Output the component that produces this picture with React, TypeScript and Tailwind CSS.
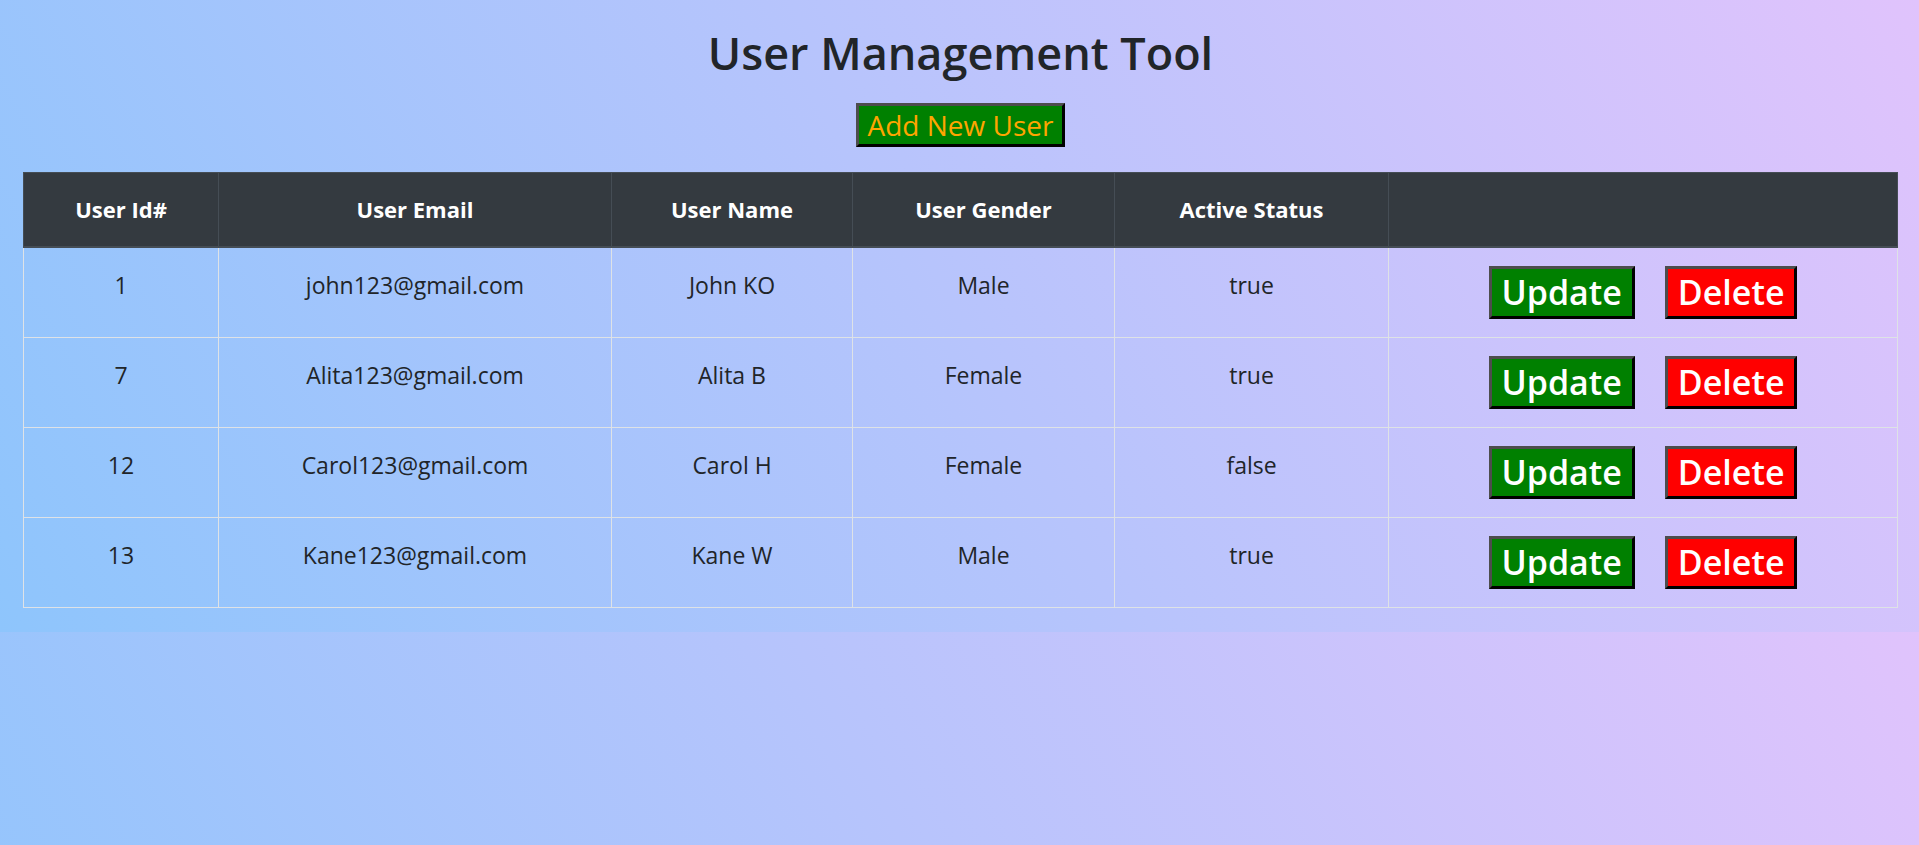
const users = [
  { id: 1, email: 'john123@gmail.com', name: 'John KO', gender: 'Male', active: 'true' },
  { id: 7, email: 'Alita123@gmail.com', name: 'Alita B', gender: 'Female', active: 'true' },
  { id: 12, email: 'Carol123@gmail.com', name: 'Carol H', gender: 'Female', active: 'false' },
  { id: 13, email: 'Kane123@gmail.com', name: 'Kane W', gender: 'Male', active: 'true' },
];

export default function App() {
  return (
    // page background repeats every 632px, like the body gradient tiling under the content
    <div
      className="min-h-screen bg-[linear-gradient(62deg,#8EC5FC_0%,#E0C3FC_100%)] bg-[length:100%_632px] bg-repeat-y text-[#212529]"
      style={{ fontFamily: '"Open Sans", "Noto Sans", sans-serif' }}
    >
      <div className="h-[632px] pt-[26px] pl-[23px] pr-[21px]">
        <h1 className="text-center text-[45px] leading-[54px] font-semibold mb-[23px]">
          User Management Tool
        </h1>
        <div className="flex justify-center">
          <button className="h-[44px] px-[9px] bg-[#008000] text-[#FFA500] text-[28px] leading-none border-[3px] border-t-[#4d4d4d] border-l-[#4d4d4d] border-r-black border-b-black">
            Add New User
          </button>
        </div>

        <table className="w-full table-fixed border-collapse mt-[25px] text-[23px]">
          <thead>
            <tr className="bg-[#343a40] text-white text-[22px]">
              <th className="w-[195px] h-[74px] align-middle font-bold border border-[#454d55] border-b-2">User Id#</th>
              <th className="w-[393px] align-middle font-bold border border-[#454d55] border-b-2">User Email</th>
              <th className="w-[241px] align-middle font-bold border border-[#454d55] border-b-2">User Name</th>
              <th className="w-[262px] align-middle font-bold border border-[#454d55] border-b-2">User Gender</th>
              <th className="w-[274px] align-middle font-bold border border-[#454d55] border-b-2">Active Status</th>
              <th className="align-middle border border-[#454d55] border-b-2"></th>
            </tr>
          </thead>
          <tbody>
            {users.map((u) => (
              <tr key={u.id}>
                <td className="text-center align-top pt-[18px] pb-[18px] leading-[38px] border border-[#dee2e6]">{u.id}</td>
                <td className="text-center align-top pt-[18px] pb-[18px] leading-[38px] border border-[#dee2e6]">{u.email}</td>
                <td className="text-center align-top pt-[18px] pb-[18px] leading-[38px] border border-[#dee2e6]">{u.name}</td>
                <td className="text-center align-top pt-[18px] pb-[18px] leading-[38px] border border-[#dee2e6]">{u.gender}</td>
                <td className="text-center align-top pt-[18px] pb-[18px] leading-[38px] border border-[#dee2e6]">{u.active}</td>
                <td className="align-top pt-[18px] pb-[18px] border border-[#dee2e6]">
                  <div className="flex justify-center gap-[30px]">
                    <button className="h-[53px] px-[10px] bg-[#008000] text-white text-[34px] font-semibold leading-none border-[3px] border-t-[#4d4d4d] border-l-[#4d4d4d] border-r-black border-b-black">
                      Update
                    </button>
                    <button className="h-[53px] px-[10px] bg-[#ff0000] text-white text-[34px] font-semibold leading-none border-[3px] border-t-[#4d4d4d] border-l-[#4d4d4d] border-r-black border-b-black">
                      Delete
                    </button>
                  </div>
                </td>
              </tr>
            ))}
          </tbody>
        </table>
      </div>
    </div>
  );
}
